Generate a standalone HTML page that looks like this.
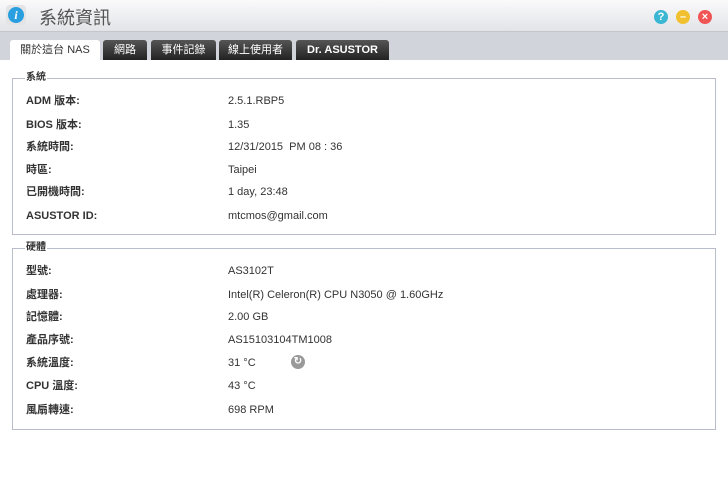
<!DOCTYPE html><html><head><meta charset="utf-8"><style>
body{margin:0;width:728px;height:497px;background:#fff;font-family:"Liberation Sans","Noto Sans CJK TC",sans-serif;font-size:11px;color:#333;position:relative;overflow:hidden}
.title{position:absolute;left:0;top:0;width:728px;height:31px;background:linear-gradient(#fafafb,#e3e4e8);border-bottom:1px solid #c4c6cc}
.tabbar{position:absolute;left:0;top:32px;width:728px;height:28px;background:#d1d4da}
.tab{position:absolute;top:8px;height:20px;line-height:20px;text-align:center;background:linear-gradient(#555,#222);color:#fff;border-radius:3px 3px 0 0;font-size:11px}
.tab.a{background:#fff;color:#333;height:21px}
.box{position:absolute;left:12px;width:702px;border:1px solid #b8bccb}
.leg{position:absolute;left:12px;top:-8px;background:#fff;padding:0 1px;font-size:10px;line-height:14px;color:#333;font-weight:bold}
.r,.v{position:absolute;font-size:11px;line-height:14px;height:14px;overflow:visible}
.r{left:13px;font-weight:bold}
.v{left:215px}
.c{position:absolute;top:10px;width:14px;height:14px;border-radius:50%;color:#fff;font-size:11px;line-height:14px;text-align:center;font-weight:bold}
</style></head><body>
<div class="title">
<div style="position:absolute;left:6px;top:5px;width:20px;height:20px;border-radius:4px;background:#e4e4e7"><div style="position:absolute;left:2px;top:2px;width:16px;height:16px;border-radius:50%;background:#2a9fe0;color:#fff;font:italic bold 12px 'Liberation Serif',serif;text-align:center;line-height:16px">i</div></div>
<div style="position:absolute;left:39px;top:4px;font-size:18px;color:#555">系統資訊</div>
<div class="c" style="left:654px;background:#3bb6d3">?</div>
<div class="c" style="left:676px;background:#f0c030">–</div>
<div class="c" style="left:698px;background:#f05555">×</div>
</div>
<div class="tabbar">
<div class="tab a" style="left:10px;width:90px">關於這台 NAS</div>
<div class="tab" style="left:103px;width:44px">網路</div>
<div class="tab" style="left:151px;width:65px">事件記錄</div>
<div class="tab" style="left:219px;width:73px">線上使用者</div>
<div class="tab" style="left:296px;width:93px;font-weight:bold">Dr. ASUSTOR</div>
</div>
<div class="box" style="top:78px;height:155px">
<div class="leg">系統</div>
<div class="r" style="top:15px">ADM 版本:</div><div class="v" style="top:15px">2.5.1.RBP5</div>
<div class="r" style="top:39px">BIOS 版本:</div><div class="v" style="top:39px">1.35</div>
<div class="r" style="top:61px">系統時間:</div><div class="v" style="top:61px">12/31/2015&nbsp; PM 08 : 36</div>
<div class="r" style="top:84px">時區:</div><div class="v" style="top:84px">Taipei</div>
<div class="r" style="top:106px">已開機時間:</div><div class="v" style="top:106px">1 day, 23:48</div>
<div class="r" style="top:130px">ASUSTOR ID:</div><div class="v" style="top:130px">mtcmos@gmail.com</div>
</div>
<div class="box" style="top:248px;height:180px">
<div class="leg">硬體</div>
<div class="r" style="top:15px">型號:</div><div class="v" style="top:15px">AS3102T</div>
<div class="r" style="top:39px">處理器:</div><div class="v" style="top:39px">Intel(R) Celeron(R) CPU N3050 @ 1.60GHz</div>
<div class="r" style="top:61px">記憶體:</div><div class="v" style="top:61px">2.00 GB</div>
<div class="r" style="top:84px">產品序號:</div><div class="v" style="top:84px">AS15103104TM1008</div>
<div class="r" style="top:107px">系統溫度:</div><div class="v" style="top:107px">31 °C</div>
<div style="position:absolute;left:278px;top:106px;width:14px;height:14px;border-radius:50%;background:#999;color:#fff;font-size:10px;line-height:14px;text-align:center;font-weight:bold">↻</div>
<div class="r" style="top:130px">CPU 溫度:</div><div class="v" style="top:130px">43 °C</div>
<div class="r" style="top:154px">風扇轉速:</div><div class="v" style="top:154px">698 RPM</div>
</div>
</body></html>
